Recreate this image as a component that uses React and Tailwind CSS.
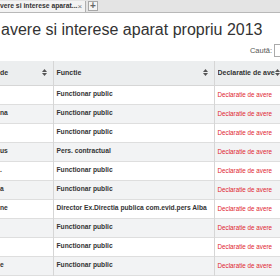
import React from "react";

const rows = [
  { name: "", role: "Functionar public" },
  { name: "na", role: "Functionar public" },
  { name: "", role: "Functionar public" },
  { name: "us", role: "Pers. contractual" },
  { name: ".", role: "Functionar public" },
  { name: "a", role: "Functionar public" },
  { name: "ne", role: "Director Ex.Directia publica com.evid.pers Alba" },
  { name: "", role: "Functionar public" },
  { name: "", role: "Functionar public" },
  { name: "e", role: "Functionar public" },
];

const SortIcon = () => (
  <svg width="5" height="7" viewBox="0 0 5 7" className="shrink-0">
    <path d="M2.5 0 L5 3 L0 3 Z" fill="#555" />
    <path d="M2.5 7 L5 4 L0 4 Z" fill="#555" />
  </svg>
);

const App = () => {
  return (
    <div className="w-[280px] h-[280px] overflow-hidden bg-white font-['Liberation_Sans',Arial,sans-serif]">
      {/* Tab strip */}
      <div className="h-[13px] bg-[#e4e4e4] border-b border-[#b8b8b8] flex items-end">
        <div className="w-[86px] h-[11px] bg-[#f3f3f3] border-r border-[#b0b0b0] flex items-center justify-between pr-[3px]">
          <span className="text-[6.8px] leading-none font-bold text-[#333] whitespace-nowrap">
            vere si interese aparat...
          </span>
          <span className="text-[8px] leading-none text-[#777]">×</span>
        </div>
        <div className="ml-[2px] mb-[1px] w-[10px] h-[10px] border border-[#a8a8a8] bg-[#f4f4f4] flex items-center justify-center text-[10px] leading-none text-[#666] font-bold">
          +
        </div>
      </div>

      {/* Title */}
      <h1 className="mt-[7px] pl-[1px] text-[16px] leading-[20px] text-[#333] whitespace-nowrap">
        avere si interese aparat propriu 2013
      </h1>

      {/* Search */}
      <div className="h-[21px] flex items-center justify-end gap-[2px]">
        <span className="text-[7.5px] text-[#555]">Caută:</span>
        <div className="w-[6px] h-[13px] border border-r-0 border-[#aaa] bg-white"></div>
      </div>

      {/* Table */}
      <table className="border-collapse table-fixed w-[300px] text-[#333]">
        <colgroup>
          <col className="w-[53px]" />
          <col className="w-[161px]" />
          <col className="w-[86px]" />
        </colgroup>
        <thead>
          <tr className="h-[24px] bg-[#eceeef] border-b border-[#d6d6d6]">
            <th className="border-r border-[#d6d6d6] pr-[6px] text-left">
              <div className="flex items-center justify-between text-[7px] font-bold">
                <span>de</span>
                <SortIcon />
              </div>
            </th>
            <th className="border-r border-[#d6d6d6] pl-[3px] pr-[6px] text-left">
              <div className="flex items-center justify-between text-[7px] font-bold">
                <span>Functie</span>
                <SortIcon />
              </div>
            </th>
            <th className="pl-[3px] text-left">
              <div className="flex items-center text-[7px] font-bold whitespace-nowrap">
                <span className="w-[57px] overflow-hidden">Declaratie de avere</span>
                <SortIcon />
              </div>
            </th>
          </tr>
        </thead>
        <tbody>
          {rows.map((r, i) => (
            <tr
              key={i}
              className={`h-[19px] border-b border-[#dedede] ${i % 2 === 1 ? "bg-[#f2f3f4]" : "bg-white"}`}
            >
              <td className="border-r border-[#d6d6d6] text-[6.7px] font-bold whitespace-nowrap">
                {r.name}
              </td>
              <td className="border-r border-[#d6d6d6] pl-[3px] text-[6.7px] font-bold whitespace-nowrap">
                {r.role}
              </td>
              <td className="pl-[3px] text-[6.3px] text-[#e0242e] whitespace-nowrap">
                Declaratie de avere
              </td>
            </tr>
          ))}
        </tbody>
      </table>
    </div>
  );
};

export default App;
